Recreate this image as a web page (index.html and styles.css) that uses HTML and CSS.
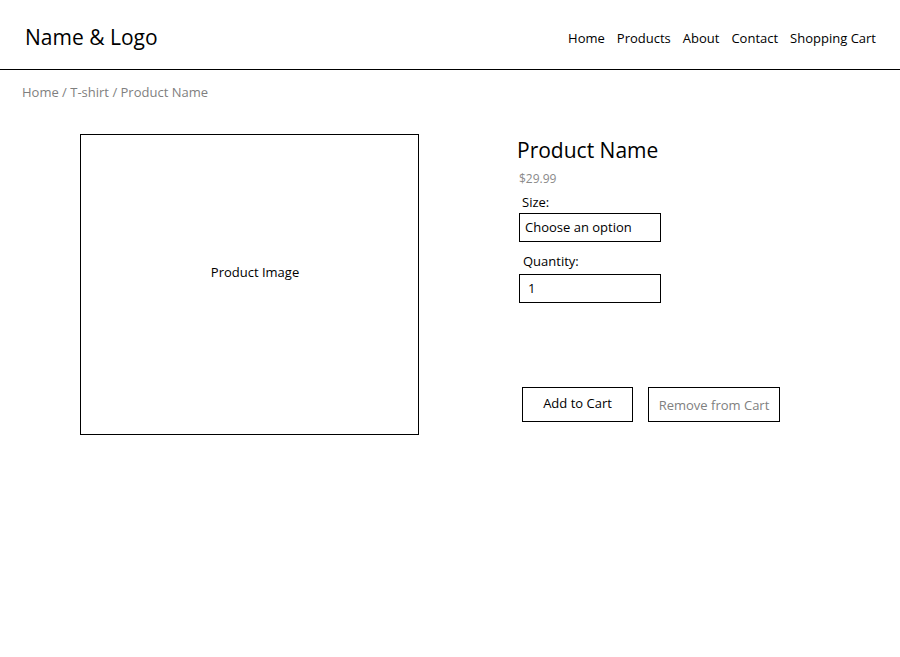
FILE: index.html
```html
<!DOCTYPE html>
<html lang="en">
<head>
<meta charset="utf-8">
<title>Product</title>
<link rel="stylesheet" href="styles.css">
</head>
<body>
<header class="site-header">
  <div class="logo">Name &amp; Logo</div>
  <nav class="nav">
    <a class="nav-home">Home</a>
    <a class="nav-products">Products</a>
    <a class="nav-about">About</a>
    <a class="nav-contact">Contact</a>
    <a class="nav-cart">Shopping Cart</a>
  </nav>
</header>
<div class="breadcrumb">Home / T-shirt / Product Name</div>
<main class="product">
  <div class="product-image">Product Image</div>
  <div class="details">
    <h1 class="title">Product Name</h1>
    <div class="price">$29.99</div>
    <div class="label label-size">Size:</div>
    <div class="field">Choose an option</div>
    <div class="label label-qty">Quantity:</div>
    <div class="field field-qty">1</div>
    <div class="actions">
      <div class="btn btn-add">Add to Cart</div>
      <div class="btn btn-remove">Remove from Cart</div>
    </div>
  </div>
</main>
</body>
</html>
```
FILE: styles.css
```css
* { box-sizing: border-box; }
body {
  margin: 0;
  font-family: "Open Sans", "Noto Sans", sans-serif;
  color: #000;
  background: #fff;
}
.site-header {
  height: 70px;
  display: flex;
  align-items: center;
  justify-content: space-between;
  padding: 0 24px 0 25px;
  border-bottom: 1px solid #000;
}
.logo {
  font-size: 21px;
  line-height: 30px;
  margin-top: 4px;
}
.nav {
  display: flex;
  gap: 12px;
  font-size: 13px;
  margin-top: 6px;
}
.nav a { color: #000; text-decoration: none; }
.breadcrumb {
  padding-left: 22px;
  margin-top: 12px;
  line-height: 20px;
  font-size: 13px;
  color: #7f7f7f;
}
.product {
  display: flex;
  padding-left: 80px;
  margin-top: 32px;
}
.product-image {
  width: 339px;
  height: 301px;
  border: 1px solid #000;
  display: flex;
  align-items: center;
  justify-content: center;
  font-size: 13px;
  padding-left: 11px;
  padding-bottom: 26px;
}
.details {
  margin-left: 98px;
  padding-top: 2px;
}
.title {
  margin: 0;
  font-weight: normal;
  font-size: 21px;
  line-height: 28px;
}
.price {
  font-size: 12px;
  color: #8a8a8a;
  margin-left: 2px;
  margin-top: 7px;
  line-height: 16px;
}
.label {
  font-size: 13px;
  line-height: 18px;
  margin-left: 5px;
  margin-top: 6px;
}
.label-qty { margin-left: 6px; margin-top: 10px; }
.field {
  width: 142px;
  height: 29px;
  border: 1px solid #000;
  margin-left: 2px;
  margin-top: 2px;
  padding-left: 5px;
  font-size: 13px;
  line-height: 27px;
}
.field-qty { padding-left: 8px; margin-top: 4px; }
.actions {
  display: flex;
  gap: 15px;
  margin-top: 84px;
  margin-left: 5px;
}
.btn {
  height: 35px;
  border: 1px solid #000;
  font-size: 13px;
  display: flex;
  align-items: center;
  justify-content: center;
}
.btn-add { width: 111px; padding-bottom: 3px; }
.btn-remove { width: 132px; color: #808080; padding-top: 1px; }
```
